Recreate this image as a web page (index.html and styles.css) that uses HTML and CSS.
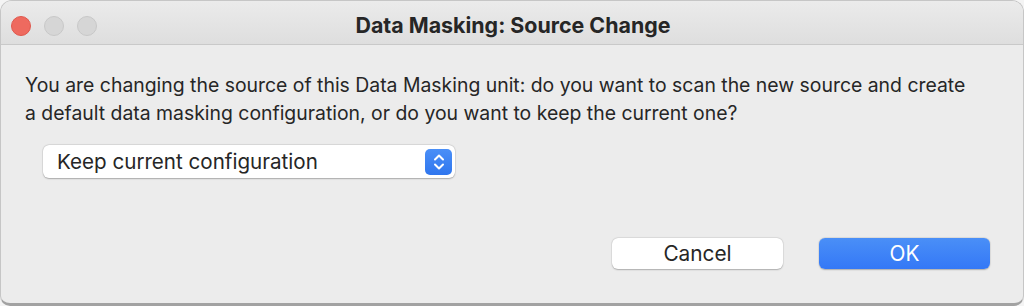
FILE: index.html
```html
<!DOCTYPE html>
<html>
<head>
<meta charset="utf-8">
<link rel="stylesheet" href="styles.css">
</head>
<body>
<div class="window">
  <div class="titlebar">
    <div class="lights">
      <span class="light close"></span>
      <span class="light"></span>
      <span class="light"></span>
    </div>
    <div class="title">Data Masking: Source Change</div>
  </div>
  <div class="content">
    <p class="message">You are changing the source of this Data Masking unit: do you want to scan the new source and create<br>a default data masking configuration, or do you want to keep the current one?</p>
    <div class="popup">
      <span class="popup-label">Keep current configuration</span>
      <span class="stepper">
        <svg width="14" height="18" viewBox="0 0 14 18"><path d="M3 6.5 L7 2.5 L11 6.5 M3 11.5 L7 15.5 L11 11.5" fill="none" stroke="#fff" stroke-width="2" stroke-linecap="round" stroke-linejoin="round"/></svg>
      </span>
    </div>
    <div class="buttons">
      <button class="btn">Cancel</button>
      <button class="btn primary">OK</button>
    </div>
  </div>
</div>
</body>
</html>
```
FILE: styles.css
```css
html, body {
  margin: 0;
  padding: 0;
  background: #f4f4f4;
}
body {
  width: 1024px;
  height: 306px;
  overflow: hidden;
  font-family: Inter, "Liberation Sans", sans-serif;
  color: #262626;
}
.window {
  box-sizing: border-box;
  height: 306px;
  border: 1px solid #c6c6c6;
  border-bottom: 3px solid #a2a2a2;
  border-radius: 12px 12px 10px 10px;
  background: #ececec;
  overflow: hidden;
  display: flex;
  flex-direction: column;
}
.titlebar {
  height: 43px;
  flex: none;
  display: flex;
  align-items: center;
  position: relative;
  background: linear-gradient(#ebebeb, #dedede);
  border-bottom: 1px solid #c9c9c9;
}
.lights {
  display: flex;
  gap: 13px;
  padding-left: 10px;
  padding-top: 7px;
}
.light {
  width: 20px;
  height: 20px;
  border-radius: 50%;
  box-sizing: border-box;
  background: #d6d6d6;
  border: 1px solid #c8c8c8;
}
.light.close {
  background: #ee6a5f;
  border-color: #e0584d;
}
.title {
  position: absolute;
  left: 0;
  right: 0;
  top: 0;
  bottom: 0;
  display: flex;
  align-items: center;
  justify-content: center;
  padding-top: 4px;
  font-weight: 700;
  font-size: 21.4px;
  color: #262626;
  padding-left: 0;
  text-indent: 2px;
}
.content {
  flex: 1;
  padding: 26px 24px 0 24px;
  display: flex;
  flex-direction: column;
}
.message {
  margin: 0;
  font-size: 19.4px;
  line-height: 28px;
}
.popup {
  margin-top: 18px;
  margin-left: 18px;
  width: 412px;
  height: 33px;
  box-sizing: border-box;
  background: #fff;
  border-radius: 6px;
  box-shadow: 0 0.5px 1.5px rgba(0,0,0,0.25), 0 0 0 0.5px rgba(0,0,0,0.08);
  display: flex;
  align-items: center;
  justify-content: space-between;
  padding: 0 3px 0 14px;
  font-size: 20.6px;
}
.stepper {
  width: 27px;
  height: 26px;
  border-radius: 5px;
  background: linear-gradient(#4a8ff7, #2f76ee);
  display: flex;
  align-items: center;
  justify-content: center;
}
.buttons {
  margin-top: 60px;
  display: flex;
  justify-content: flex-end;
  gap: 36px;
  padding-right: 9px;
}
.btn {
  width: 171px;
  height: 31px;
  border: none;
  border-radius: 6px;
  background: #fff;
  box-shadow: 0 0.5px 1.5px rgba(0,0,0,0.25), 0 0 0 0.5px rgba(0,0,0,0.06);
  font-family: inherit;
  font-size: 20.8px;
  color: #262626;
  padding: 0;
}
.btn.primary {
  background: linear-gradient(#4a8ff7, #3478f6);
  color: #fff;
}
```
